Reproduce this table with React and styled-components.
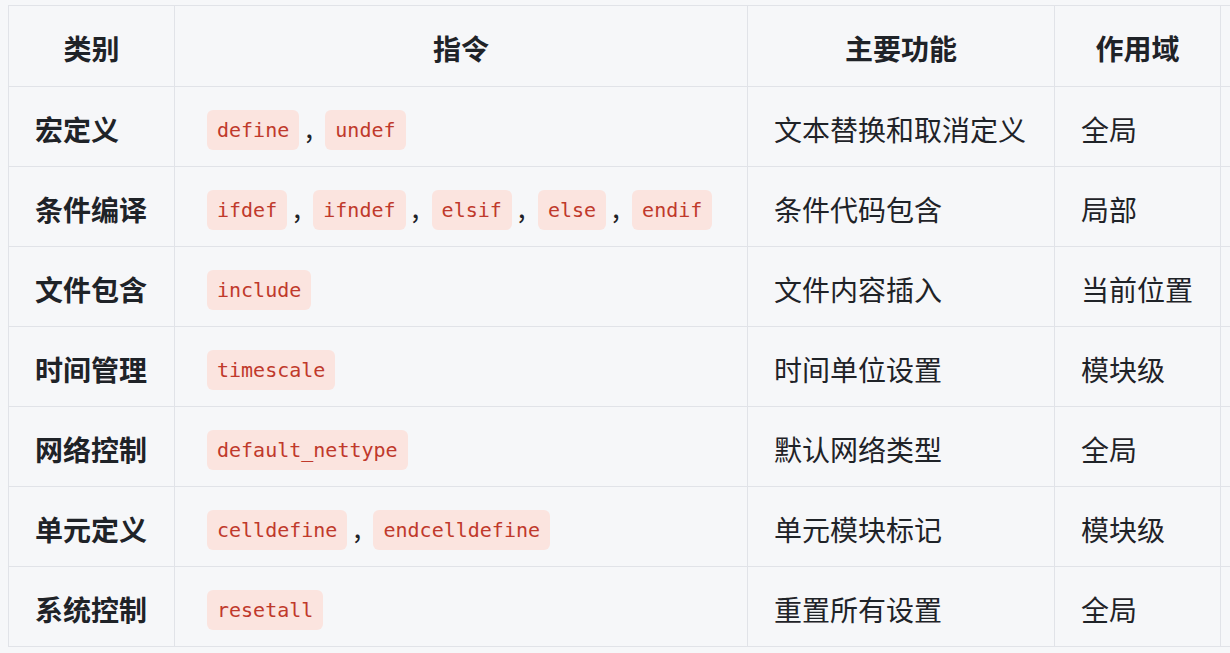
import React from "react";
import styled, { createGlobalStyle } from "styled-components";

const Global = createGlobalStyle`
  html, body {
    margin: 0;
    padding: 0;
    background: #f6f7f9;
    overflow: hidden;
  }
  body {
    font-family: "Noto Sans CJK SC", "Noto Sans", sans-serif;
    color: #1f2328;
  }
`;

const Page = styled.div`
  padding: 5px 0 0 8px;
  width: 1600px;
`;

const Table = styled.table`
  border-collapse: collapse;
  table-layout: fixed;
  width: 1400px;
  font-size: 28px;
`;

const Th = styled.th`
  height: 76px;
  padding: 4px 26px 0;
  border: 1px solid #e1e3e8;
  font-weight: 700;
  text-align: center;
  vertical-align: middle;
  white-space: nowrap;
`;

const Td = styled.td`
  height: 73px;
  padding: 5px 26px 1px;
  border: 1px solid #e1e3e8;
  vertical-align: middle;
  white-space: nowrap;
  font-weight: ${({ $bold }) => ($bold ? 700 : 400)};
`;

const Code = styled.code`
  display: inline-block;
  margin: 0 6px;
  padding: 0 10px;
  height: 40px;
  line-height: 40px;
  vertical-align: middle;
  border-radius: 6px;
  background: #fbe4df;
  color: #c0392b;
  font-family: "DejaVu Sans Mono", "Liberation Mono", monospace;
  font-size: 20px;
  position: relative;
  top: -1px;
`;

const Sep = styled.span`
  font-size: 28px;
`;

const rows = [
  ["宏定义", ["define", "undef"], "文本替换和取消定义", "全局"],
  ["条件编译", ["ifdef", "ifndef", "elsif", "else", "endif"], "条件代码包含", "局部"],
  ["文件包含", ["include"], "文件内容插入", "当前位置"],
  ["时间管理", ["timescale"], "时间单位设置", "模块级"],
  ["网络控制", ["default_nettype"], "默认网络类型", "全局"],
  ["单元定义", ["celldefine", "endcelldefine"], "单元模块标记", "模块级"],
  ["系统控制", ["resetall"], "重置所有设置", "全局"],
];

export default function App() {
  return (
    <Page>
      <Global />
      <Table>
        <colgroup>
          <col style={{ width: 166 }} />
          <col style={{ width: 573 }} />
          <col style={{ width: 307 }} />
          <col style={{ width: 166 }} />
          <col />
        </colgroup>
        <thead>
          <tr>
            <Th>类别</Th>
            <Th>指令</Th>
            <Th>主要功能</Th>
            <Th>作用域</Th>
            <Th></Th>
          </tr>
        </thead>
        <tbody>
          {rows.map(([cat, codes, func, scope]) => (
            <tr key={cat}>
              <Td $bold>{cat}</Td>
              <Td>
                {codes.map((c, i) => (
                  <React.Fragment key={c}>
                    {i > 0 && <Sep>, </Sep>}
                    <Code>{c}</Code>
                  </React.Fragment>
                ))}
              </Td>
              <Td>{func}</Td>
              <Td>{scope}</Td>
              <Td></Td>
            </tr>
          ))}
        </tbody>
      </Table>
    </Page>
  );
}
